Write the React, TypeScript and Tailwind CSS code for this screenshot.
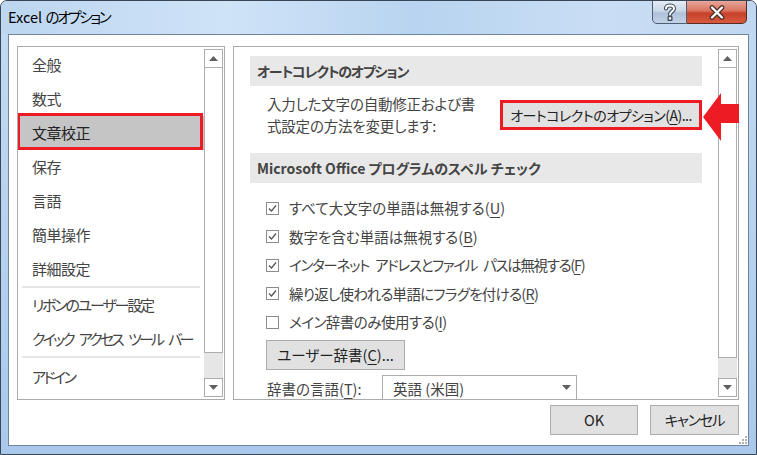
import React from 'react';

const F = "font-['Noto_Sans_CJK_JP','Noto_Sans_CJK_SC',sans-serif] [font-feature-settings:'palt']";

function Tri({ down }: { down?: boolean }) {
  return (
    <svg width="9" height="5" viewBox="0 0 9 5">
      {down ? <polygon points="0,0 9,0 4.5,5" fill="#606060" /> : <polygon points="0,5 9,5 4.5,0" fill="#606060" />}
    </svg>
  );
}

function ScrollBar({ grey }: { grey: number }) {
  return (
    <div className="flex flex-col w-[19px] mr-[1px] py-[2px] shrink-0">
      <div className="h-[19px] border border-[#adadad] bg-white flex items-center justify-center shrink-0">
        <Tri />
      </div>
      <div className="flex-1 border border-[#adadad] border-t-0 bg-white" />
      <div className="bg-[#e6e6e6] shrink-0" style={{ height: grey }} />
      <div className="h-[19px] border border-[#adadad] bg-white flex items-center justify-center shrink-0">
        <Tri down />
      </div>
    </div>
  );
}

function U({ c }: { c: string }) {
  return <span className="underline underline-offset-[3px] decoration-[1px]">{c}</span>;
}

function Sp() {
  return <span className="inline-block w-[6px]" />;
}

function Check({ on }: { on: boolean }) {
  return (
    <div className="w-[13px] h-[13px] border border-[#8c8c8c] bg-white flex items-center justify-center shrink-0">
      {on && (
        <svg width="11" height="11" viewBox="0 0 11 11">
          <polyline points="2,5.5 4.5,8 9,2.5" fill="none" stroke="#555" strokeWidth="1.3" />
        </svg>
      )}
    </div>
  );
}

const items1 = ['全般', '数式', '文章校正', '保存', '言語', '簡単操作', '詳細設定'];

const checks: [boolean, React.ReactNode, string, string][] = [
  [true, 'すべて大文字の単語は無視する(', 'U', 'tracking-[0px]'],
  [true, '数字を含む単語は無視する(', 'B', 'tracking-[0px]'],
  [
    true,
    <>
      インターネット<Sp />アドレスとファイル<Sp />パスは無視する(
    </>,
    'F',
    'tracking-[-1.3px]',
  ],
  [true, '繰り返し使われる単語にフラグを付ける(', 'R', 'tracking-[-0.7px]'],
  [false, 'メイン辞書のみ使用する(', 'I', 'tracking-[-0.5px]'],
];

export default function App() {
  return (
    <div className={`${F} relative w-[757px] h-[455px] border border-[#3a4656] rounded-t-[7px] bg-[linear-gradient(180deg,#c3dbf3_0%,#b9d4ef_40%,#a9c9ec_100%)] flex flex-col overflow-hidden text-[#444]`}>
      {/* title bar */}
      <div className="h-[33px] flex items-start shrink-0 bg-[linear-gradient(90deg,#bcd6f0_0%,#cfe3f7_30%,#b8d4f0_55%,#c9def4_80%,#bfd7f0_100%)]">
        <div className="pl-[7px] pt-[6px] text-[14.5px] leading-[20px] text-black whitespace-nowrap">
          Excel <span className="tracking-[-2.3px]">のオプション</span>
        </div>
        <div className="ml-auto mr-[9px] flex -mt-[1px]">
          <div className="w-[35px] h-[24px] border border-[#4f5e72] rounded-bl-[5px] bg-[linear-gradient(180deg,#e4ecf6_0%,#cad7e7_45%,#afc1d8_55%,#c3d3e6_100%)] flex items-center justify-center">
            <svg width="14" height="18" viewBox="0 0 14 18">
              <path d="M3,5.5 C3,1.5 11,1.5 11,5.5 C11,8.5 7,8.5 7,11.5" fill="none" stroke="#3b4a5c" strokeWidth="4.2" strokeLinecap="round" />
              <path d="M3,5.5 C3,1.5 11,1.5 11,5.5 C11,8.5 7,8.5 7,11.5" fill="none" stroke="#fff" strokeWidth="2" strokeLinecap="round" />
              <rect x="4.5" y="13" width="5" height="5" rx="1" fill="#3b4a5c" />
              <rect x="5.8" y="14.2" width="2.4" height="2.4" fill="#fff" />
            </svg>
          </div>
          <div className="w-[60px] h-[24px] border border-l-0 border-[#5a2a22] rounded-br-[5px] bg-[linear-gradient(180deg,#e7a89b_0%,#d9725f_45%,#c7402a_55%,#d65a3e_100%)] flex items-center justify-center">
            <svg width="18" height="15" viewBox="0 0 18 15">
              <path d="M4,2.5 L14,12.5 M14,2.5 L4,12.5" stroke="#4a2a25" strokeWidth="4.6" strokeLinecap="round" />
              <path d="M4,2.5 L14,12.5 M14,2.5 L4,12.5" stroke="#fff" strokeWidth="2.4" strokeLinecap="round" />
            </svg>
          </div>
        </div>
      </div>

      {/* client area */}
      <div className="mx-[7px] h-[412px] border border-[#71849b] bg-white flex flex-col shrink-0">
        <div className="flex pl-[8px] pt-[11px] pr-[9px] gap-[8px]">
          {/* left panel */}
          <div className="w-[208px] h-[354px] border border-[#ababab] flex overflow-hidden">
            <div className="flex-1 flex flex-col pt-[1px] text-[15px] whitespace-nowrap">
              {items1.map((t) => (
                <div key={t} className={`relative h-[34px] flex items-center pl-[14px] tracking-[-0.5px] ${t === '文章校正' ? 'bg-[#c5c5c5] text-[#222]' : ''}`}>
                  {t}
                  {t === '文章校正' && (
                    <div className="absolute -top-[3px] -left-[1px] right-[1px] bottom-0 border-[3px] border-[#ed1c24]" />
                  )}
                </div>
              ))}
              <div className="mx-[4px] h-[2px] bg-[#e6e6e6]" />
              <div className="h-[34px] flex items-center pl-[14px] tracking-[-2.2px]">リボンのユーザー設定</div>
              <div className="h-[34px] flex items-center pl-[14px] tracking-[-2.8px]">
                クイック<Sp />アクセス<Sp />ツール<Sp />バー
              </div>
              <div className="mx-[4px] h-[2px] bg-[#e6e6e6]" />
              <div className="h-[38px] flex items-center pl-[14px] tracking-[-2.5px]">アドイン</div>
            </div>
            <ScrollBar grey={25} />
          </div>

          {/* right panel */}
          <div className="w-[506px] h-[354px] border border-[#ababab] flex overflow-hidden">
            <div className="flex-1 px-[16px] pt-[9px] overflow-hidden">
              <div className="h-[30px] bg-[#e8e8e8] flex items-center pl-[7px] text-[14px] font-bold text-[#444] tracking-[-1.2px]">
                オートコレクトのオプション
              </div>
              <div className="mt-[7px] h-[44px] flex items-center justify-between pl-[17px]">
                <div className="text-[14.5px] leading-[22px] tracking-[-0.2px]">
                  入力した文字の自動修正および書
                  <br />
                  式設定の方法を変更します:
                </div>
                <div className="w-[202px] h-[30px] border-[3px] border-[#ed1c24] bg-[#e1e1e1] flex items-center justify-center text-[14px] text-[#222] tracking-[-0.5px] whitespace-nowrap">
                  オートコレクトのオプション(<U c="A" />)...
                </div>
              </div>
              <div className="mt-[16px] h-[30px] bg-[#e8e8e8] flex items-center pl-[7px] text-[14px] font-bold text-[#444] whitespace-nowrap">
                Microsoft Office プログラムのスペル チェック
              </div>
              <div className="mt-[11px] pl-[16px] text-[14.5px] whitespace-nowrap">
                {checks.map(([on, t, k, tr], i) => (
                  <div key={i} className={`h-[28.5px] flex items-center gap-[10px] ${tr}`}>
                    <Check on={on} />
                    <span>
                      {t}
                      <U c={k} />)
                    </span>
                  </div>
                ))}
                <div className="mt-[3.5px] w-[139px] h-[30px] border border-[#adadad] bg-[#e1e1e1] flex items-center justify-center text-[14.5px] text-[#222]">
                  ユーザー辞書(<U c="C" />)...
                </div>
                <div className="mt-[5px] flex items-start">
                  <div className="pt-[3px] pl-[1px] w-[116px]">
                    辞書の言語(<U c="T" />):
                  </div>
                  <div className="relative w-[195px] h-[34px] border border-[#acacac] bg-white pl-[10px] pt-[2px]">
                    英語 (米国)
                    <div className="absolute right-[5px] top-[9px]">
                      <Tri down />
                    </div>
                  </div>
                </div>
              </div>
            </div>
            <ScrollBar grey={20} />
          </div>
        </div>

        {/* buttons */}
        <div className="mt-[5px] flex justify-end gap-[12px] pr-[9px] text-[14.5px] text-[#222]">
          <div className="w-[88px] h-[30px] border border-[#adadad] bg-[#e1e1e1] flex items-center justify-center">OK</div>
          <div className="w-[89px] h-[30px] border border-[#adadad] bg-[#e1e1e1] flex items-center justify-center tracking-[-1.2px]">キャンセル</div>
        </div>
        <div className="flex-1 relative">
          <svg className="absolute right-[1px] bottom-[1px]" width="8" height="8" viewBox="0 0 8 8">
            <rect x="6" y="0" width="2" height="2" fill="#b0b0b0" />
            <rect x="3" y="3" width="2" height="2" fill="#b0b0b0" />
            <rect x="6" y="3" width="2" height="2" fill="#b0b0b0" />
            <rect x="0" y="6" width="2" height="2" fill="#b0b0b0" />
            <rect x="3" y="6" width="2" height="2" fill="#b0b0b0" />
            <rect x="6" y="6" width="2" height="2" fill="#b0b0b0" />
          </svg>
        </div>
      </div>

      {/* red arrow annotation */}
      <svg className="absolute left-[702px] top-[91px]" width="36" height="50" viewBox="0 0 36 50">
        <polygon points="0,25 18,1 18,12 36,12 36,31 18,31 18,49" fill="#ed1c24" />
      </svg>
    </div>
  );
}
